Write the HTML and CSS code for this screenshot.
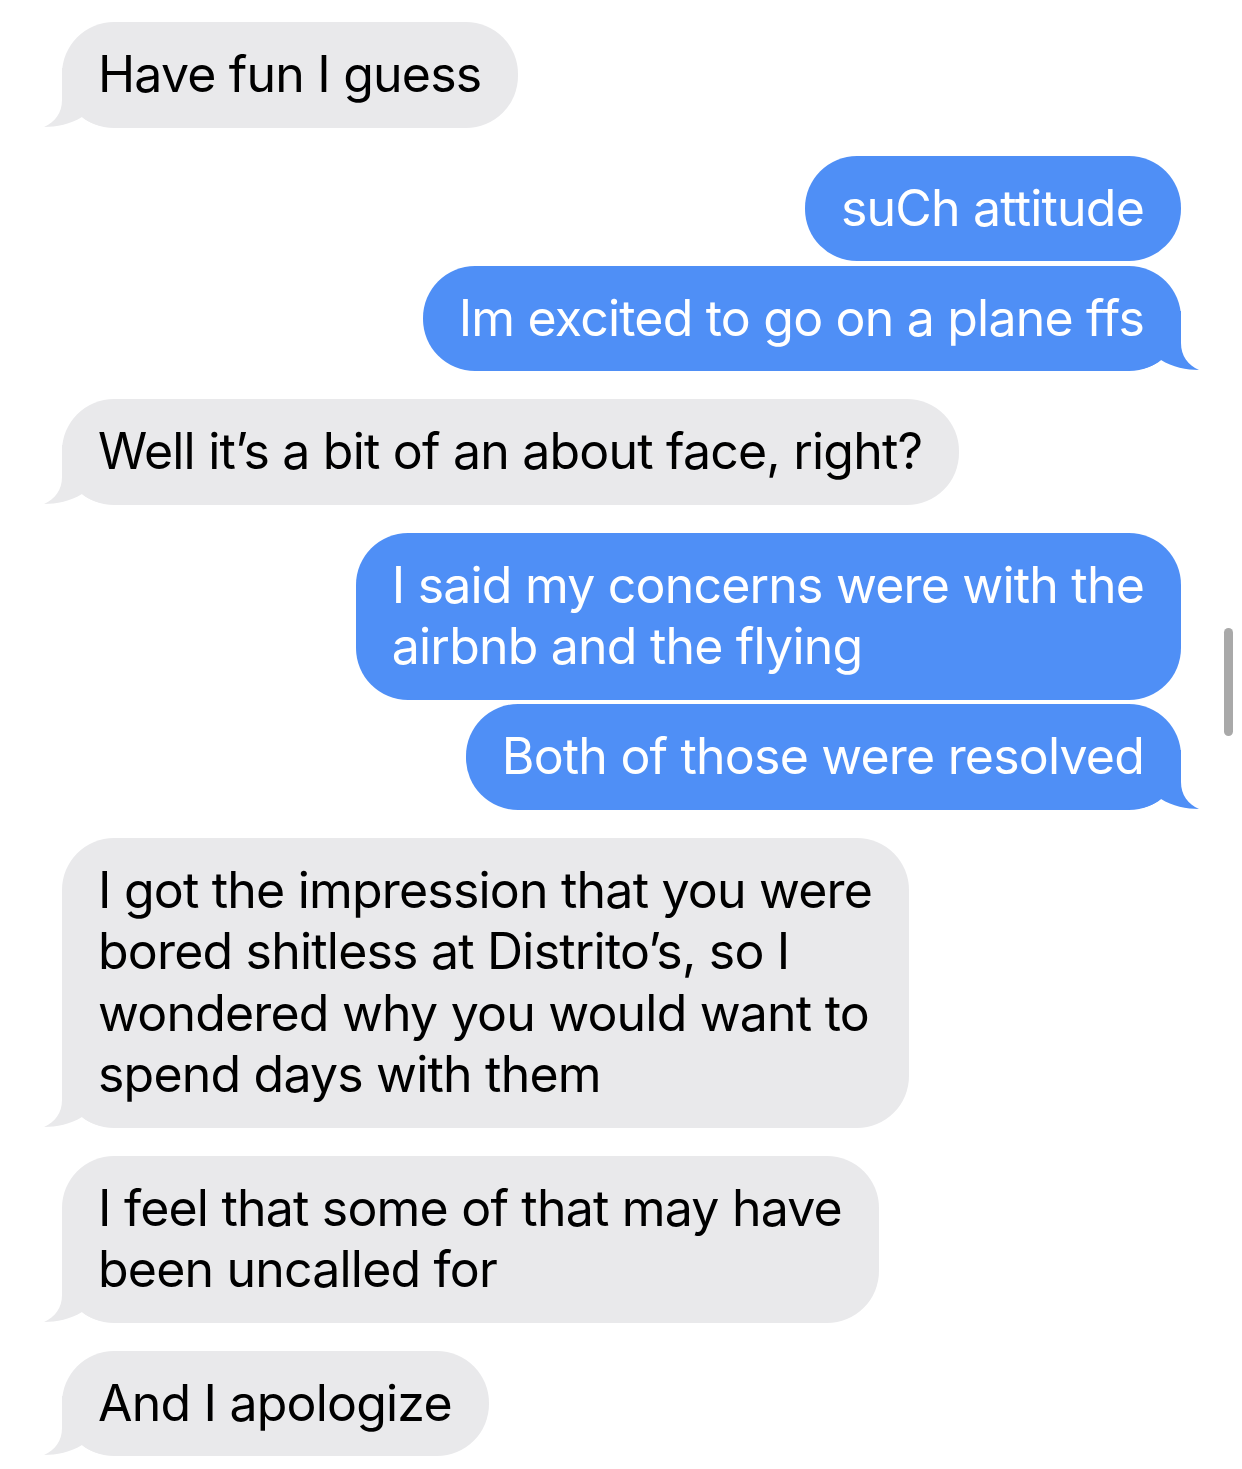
FILE: index.html
```html
<!DOCTYPE html>
<html>
<head>
<meta charset="utf-8">
<link rel="stylesheet" href="styles.css">
</head>
<body>
<div class="thread">
  <div class="msg them tail">Have fun I guess<svg class="tail-svg" viewBox="0 0 72 60"><path d="M18,0 L18,32 C18,45 11,54 0,59 C12,59 27,56 38,49 C45,55 54,59 72,59 L72,0 Z"/></svg></div>

  <div class="msg me first">suCh attitude</div>
  <div class="msg me tail">Im excited to go on a plane ffs<svg class="tail-svg" viewBox="0 0 72 60"><path d="M18,0 L18,32 C18,45 11,54 0,59 C12,59 27,56 38,49 C45,55 54,59 72,59 L72,0 Z"/></svg></div>

  <div class="msg them tail first">Well it’s a bit of an about face, right?<svg class="tail-svg" viewBox="0 0 72 60"><path d="M18,0 L18,32 C18,45 11,54 0,59 C12,59 27,56 38,49 C45,55 54,59 72,59 L72,0 Z"/></svg></div>

  <div class="msg me first">I said my concerns were with the<br>airbnb and the flying</div>
  <div class="msg me tail">Both of those were resolved<svg class="tail-svg" viewBox="0 0 72 60"><path d="M18,0 L18,32 C18,45 11,54 0,59 C12,59 27,56 38,49 C45,55 54,59 72,59 L72,0 Z"/></svg></div>

  <div class="msg them tail first">I got the impression that you were<br>bored shitless at Distrito’s, so I<br>wondered why you would want to<br>spend days with them<svg class="tail-svg" viewBox="0 0 72 60"><path d="M18,0 L18,32 C18,45 11,54 0,59 C12,59 27,56 38,49 C45,55 54,59 72,59 L72,0 Z"/></svg></div>

  <div class="msg them tail first">I feel that some of that may have<br>been uncalled for<svg class="tail-svg" viewBox="0 0 72 60"><path d="M18,0 L18,32 C18,45 11,54 0,59 C12,59 27,56 38,49 C45,55 54,59 72,59 L72,0 Z"/></svg></div>

  <div class="msg them tail first">And I apologize<svg class="tail-svg" viewBox="0 0 72 60"><path d="M18,0 L18,32 C18,45 11,54 0,59 C12,59 27,56 38,49 C45,55 54,59 72,59 L72,0 Z"/></svg></div>
</div>
<div class="scrollbar"></div>
</body>
</html>
```

FILE: styles.css
```css
html, body {
  margin: 0;
  padding: 0;
  background: #ffffff;
}

body {
  width: 1242px;
  height: 1469px;
  overflow: hidden;
  position: relative;
  font-family: Inter, "Noto Sans", "Liberation Sans", sans-serif;
}

.thread {
  display: flex;
  flex-direction: column;
  gap: 4.5px;
  padding: 22px 61px 0 62px;
}

.msg {
  position: relative;
  isolation: isolate;
  box-sizing: border-box;
  padding: 22px 37px 22px 36px;
  border-radius: 52px;
  font-size: 50px;
  line-height: 61.5px;
  letter-spacing: -0.8px;
  white-space: nowrap;
}

.msg.first {
  margin-top: 23.5px;
}

.them {
  align-self: flex-start;
  background: #e9e9eb;
  color: #000000;
}

.me {
  align-self: flex-end;
  background: #4f8ff6;
  color: #ffffff;
}

.tail-svg {
  position: absolute;
  z-index: -1;
  bottom: 0;
  width: 72px;
  height: 60px;
  pointer-events: none;
}

.them .tail-svg {
  left: -18px;
  fill: #e9e9eb;
}

.me .tail-svg {
  right: -18px;
  fill: #4f8ff6;
  transform: scaleX(-1);
}

.scrollbar {
  position: absolute;
  left: 1224px;
  top: 628px;
  width: 9px;
  height: 108px;
  border-radius: 5px;
  background: #a9a9a9;
}
```
